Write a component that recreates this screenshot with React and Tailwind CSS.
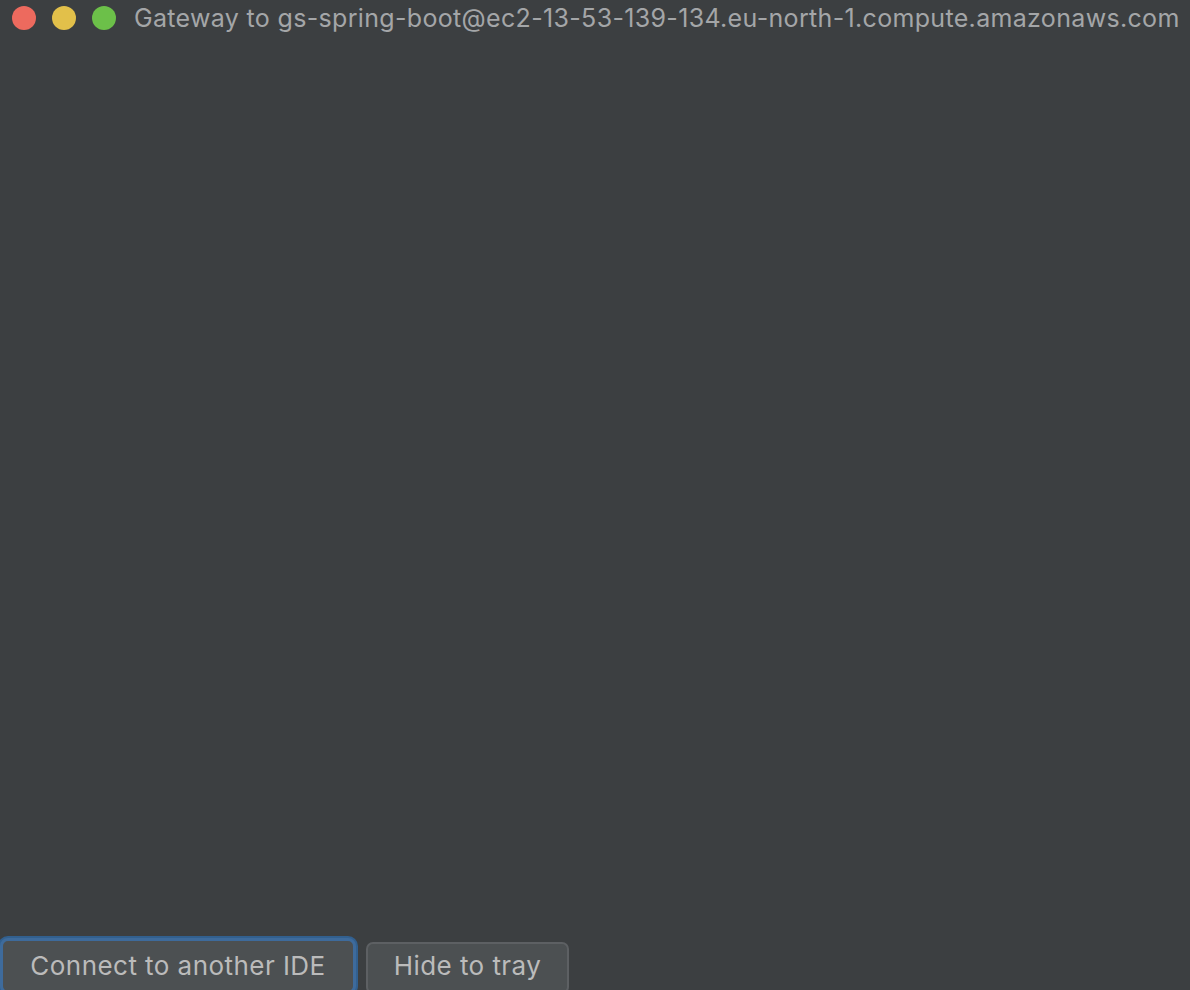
export default function App() {
  return (
    <div className="w-[1190px] h-[990px] bg-[#3c3f41] flex flex-col overflow-hidden font-['Inter',sans-serif]">
      <div className="h-[36px] flex items-center pl-[12px] shrink-0">
        <div className="flex gap-[16px]">
          <span className="w-[24px] h-[24px] rounded-full bg-[#ed6a5e]" />
          <span className="w-[24px] h-[24px] rounded-full bg-[#e2c04a]" />
          <span className="w-[24px] h-[24px] rounded-full bg-[#6cc049]" />
        </div>
        <span className="ml-[18px] text-[25px] leading-none tracking-[0.33px] text-[#a4a6a8] whitespace-nowrap">
          Gateway to gs-spring-boot@ec2-13-53-139-134.eu-north-1.compute.amazonaws.com
        </span>
      </div>
      <div className="flex-1" />
      <div className="flex items-start gap-[10px] h-[52px] shrink-0">
        <button className="w-[356px] h-[56px] rounded-[8px] border-[3px] border-[#3e6b9c] bg-[#4c5052] ring-2 ring-[#32608f] text-[#bbbbbb] text-[26px] tracking-[0.45px] text-center pb-[2px]">
          Connect to another IDE
        </button>
        <button className="mt-[4px] w-[203px] h-[52px] rounded-[7px] border-[2px] border-[#5d6063] bg-[#4c5052] text-[#bbbbbb] text-[26px] tracking-[0.45px] pb-[5px]">
          Hide to tray
        </button>
      </div>
    </div>
  );
}
